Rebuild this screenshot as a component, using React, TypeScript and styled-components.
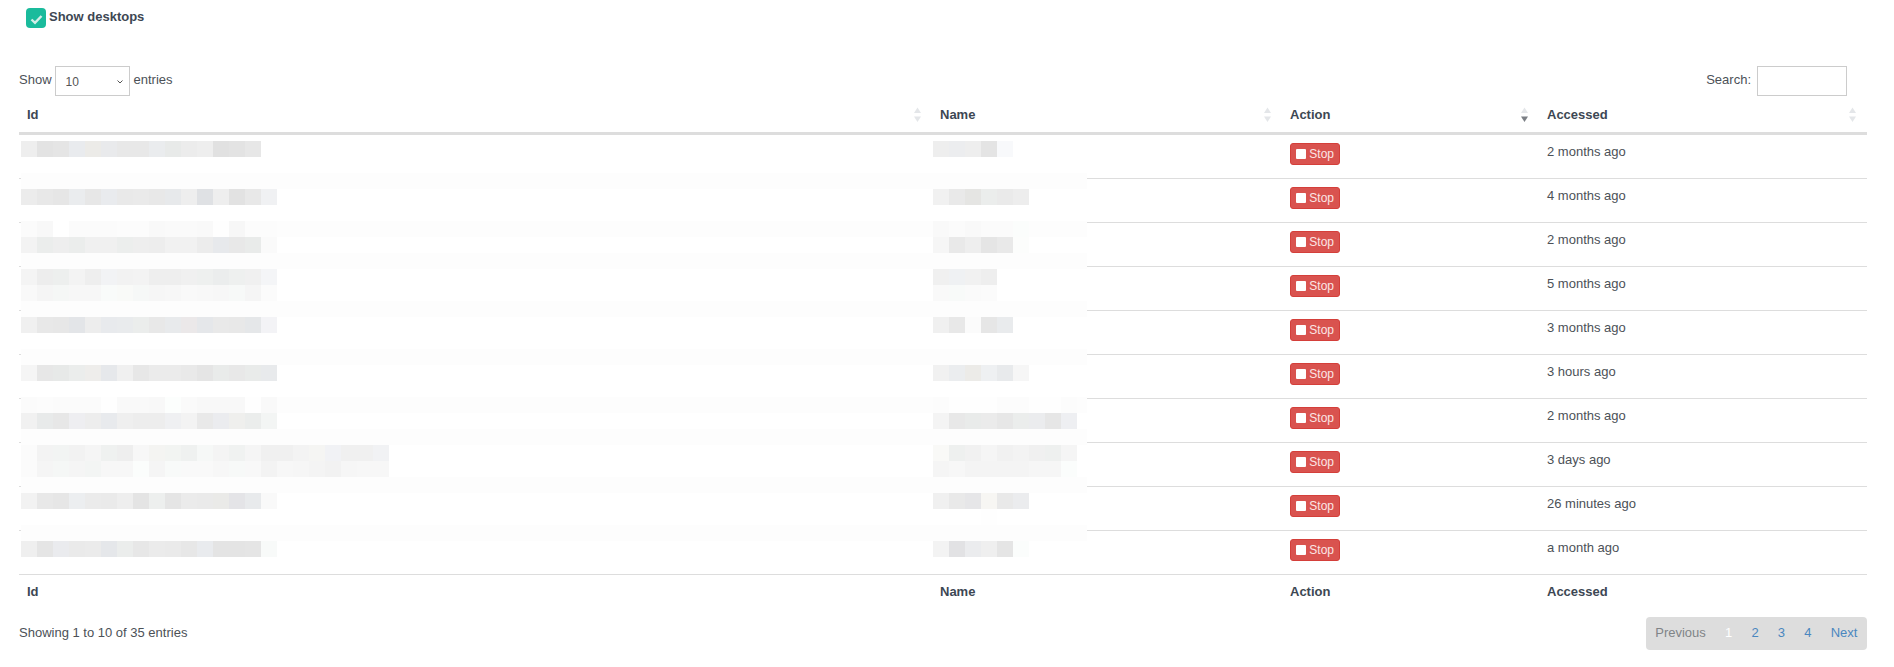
import React from "react";
import styled, { createGlobalStyle } from "styled-components";

const GlobalStyle = createGlobalStyle`
  html, body {
    margin: 0;
    padding: 0;
    background: #fff;
  }
  body {
    font-family: "Liberation Sans", Arial, sans-serif;
    font-size: 13px;
    line-height: 1.42857;
    color: #4c5157;
  }
`;

const Page = styled.div`
  padding: 0 27px 0 19px;
`;

const ToggleRow = styled.label`
  display: flex;
  align-items: flex-start;
  gap: 3px;
  padding: 8px 0 0 7px;
  height: 28px;
  box-sizing: border-box;
  font-weight: 700;
  color: #3d4753;
`;

const CheckBox = styled.span`
  display: block;
  width: 20px;
  height: 20px;
  border-radius: 4px;
  background: #1abb9c;
`;

const Controls = styled.div`
  display: flex;
  justify-content: space-between;
  align-items: center;
  height: 30px;
  margin-top: 38px;
  padding-right: 20px;
`;

const LengthLabel = styled.label`
  display: flex;
  align-items: flex-start;
  line-height: 28px;
`;

const SelectBox = styled.span`
  position: relative;
  display: block;
  margin: 0 4px 0 3px;
`;

const LengthSelect = styled.select`
  display: block;
  width: 75px;
  height: 30px;
  box-sizing: border-box;
  padding: 1px 0 0 10px;
  border: 1px solid #ccc;
  border-radius: 0;
  appearance: none;
  background: #fff;
  color: #555;
  font: 12px "Liberation Sans", Arial, sans-serif;
`;

const SelectArrow = styled.svg`
  position: absolute;
  top: 14px;
  right: 7px;
  pointer-events: none;
`;

const SearchLabel = styled.label`
  display: flex;
  align-items: flex-start;
  gap: 6px;
  line-height: 28px;
`;

const SearchInput = styled.input`
  width: 90px;
  height: 30px;
  box-sizing: border-box;
  border: 1px solid #ccc;
  border-radius: 0;
  background: #fff;
  outline: none;
`;

const TableWrap = styled.div`
  position: relative;
`;

const Table = styled.table`
  width: 1848px;
  table-layout: fixed;
  border-collapse: separate;
  border-spacing: 0;
`;

const HeadCell = styled.th`
  height: 34px;
  padding: 2px 11px 0 8px;
  border-bottom: 3px solid #ddd;
  font-weight: 700;
  text-align: left;
  color: #3d4753;
`;

const HeadInner = styled.div`
  display: flex;
  justify-content: space-between;
  align-items: center;
`;

const FootCell = styled.th`
  height: 35px;
  box-sizing: border-box;
  padding: 0 8px;
  border-top: 1px solid #ddd;
  font-weight: 700;
  text-align: left;
  color: #3d4753;
`;

const Cell = styled.td`
  padding: 8px;
  vertical-align: top;
  border-top: 1px solid #ddd;
  tr:first-child > & {
    border-top: 0;
  }
`;

const StopButton = styled.button`
  display: flex;
  align-items: center;
  gap: 3.5px;
  width: 50px;
  height: 22px;
  box-sizing: border-box;
  margin: 0 0 5px;
  padding: 0 5px;
  border: 1px solid #d43f3a;
  border-radius: 3px;
  background: #d9534f;
  color: #fbe6e5;
  font: 12px "Liberation Sans", Arial, sans-serif;
`;

const StopSquare = styled.span`
  width: 10.5px;
  height: 10.5px;
  border-radius: 1px;
  background: #fff;
`;

const Mosaic = styled.svg`
  position: absolute;
  left: 2px;
  top: 45px;
  display: block;
`;

const Bottom = styled.div`
  display: flex;
  justify-content: space-between;
  align-items: center;
  height: 33px;
  margin-top: 8px;
`;

const Pager = styled.div`
  display: flex;
  align-items: center;
  height: 33px;
  border-radius: 4px;
  background: #ddd;
`;

const PageLink = styled.a<{ $tone: "off" | "current" | "link" }>`
  padding: 0 9.6px;
  color: ${(p) =>
    p.$tone === "off" ? "#808487" : p.$tone === "current" ? "#fff" : "#4a87bf"};
  text-decoration: none;
`;

function SortIcon({ active }: { active?: boolean }) {
  return (
    <svg width="7" height="16" viewBox="0 0 7 16" aria-hidden="true">
      <path d="M3.5 0.5 L7 6 H0 Z" fill="#e4e6e9" />
      <path d="M0 9.5 H7 L3.5 15 Z" fill={active ? "#7b7f85" : "#e4e6e9"} />
    </svg>
  );
}

// blurred id and name columns: [grid row, first grid column, cells]
// a two digit cell is a grey, a six digit cell is a full colour
const CELL = 16;
const BANDS = [2, 5, 7, 10, 13, 16, 18, 21, 24];
const BLOCKS: [number, number, string][] = [
  [0, 0, "ee e3 e5 e9ebee ecebe8 e9eaec e8 e8 eaecee e8eae9 ec ee e1 e3 e7"],
  [3, 0, "ec e8 e6 eaecee e7 e9ebee e9 ea e8 e7e9eb ee dfe1e4 ee e2 e8 f0f1f3"],
  [5, 0, "fb f8 ff fb fb fb fc fc f9 fa fa f9 fe f7 fc fc"],
  [6, 0, "f3 ebedec ee ebedec f0 f0 eceeed ee ed f1 f1 ec e7e9ec e8 e9ebea fa"],
  [8, 0, "f4 ed edefee f3 ee f2f3f5 f2 f3 ee ee f0 eef0ef ebeded eef0ef f0 f4f5f7"],
  [9, 0, "f9 f5 f5f7f6 f7 f7 f9fbfa f9faf8 f6f8f7 f6 f7 f9 f8 f7 f7f9f8 f5 fb"],
  [11, 0, "f0 e8 e7 e3e5e8 ed e8eaed e9ebed ebedec e8 e8eaec ebe8e9 e5e7ea e9 e8 e5e7e9 f3f3f6"],
  [14, 0, "f5 e7 e7e9e8 ebedec eeedeb e6e8eb f0 e7 eb eb e9 e5 e9ebea e8 e9ebea e8eaec"],
  [16, 0, "fb fc fb fb fb fe f9 f9 f8 fcfefd fa f8 f8 f8 fe f9"],
  [17, 0, "f1 e8eaea e7 eeeef1 ed e8eaed ef ed ed eff0f2 f3 e9 ebecef efefed ebedec f3f5f4"],
  [19, 0, "fb f3 f2f4f3 f2 f5 eff1f0 ee f7 f4f4f2 f2f4f2 eff1f0 f6f8f7 f4 f0f2f1 f5 f0 f0 f3 f5f5f3 f1f2f5 f0 f0 f1f2f4"],
  [20, 0, "fb f5 f5f7f6 f5 f3f5f4 f7 f7 fbfdfc f5 f8faf9 f9 f9 f7 f7f9f8 f8 f3 f7 f6 f4 f2 f6 f7 f7"],
  [22, 0, "f2 e8 e6 eceef0 eb ea ee e4 edefee e5 eb ea eaeae8 e4e4e7 e8eaec f9"],
  [25, 0, "ef e5 eaebee ea eb e5e7ea ebedec e7 eb ea e7 e9ebee e4 e4 e5 f8faf9"],
  [0, 57, "ee ecedef ee e4 f8f9fb"],
  [3, 57, "f1 e9 e5e5e3 ebedec ea ed"],
  [5, 57, "f9 fb f9 fb fb fbfdfc"],
  [6, 57, "f6 e9 ee e5 e9 fcfdfc"],
  [8, 57, "f0 eff1f3 f1 ee"],
  [9, 57, "f9 f8faf9 fa fb"],
  [11, 57, "f0 e8 fb e6 e9ebed"],
  [14, 57, "f1 ebedef ecebe8 eef0f2 e8eaec f6"],
  [16, 57, "fc fe fe fe fc fc fe fe fc"],
  [17, 57, "f4 e8 e9ebea eb e7 ebedec ebecee e6 eeeff2"],
  [19, 57, "f9f9f7 eef0ef f1 f5 f1 f3 f0 eef0ef f5"],
  [20, 57, "f5 f7 f4 f4 f4 f4 f6 f6 fbfdfc"],
  [22, 57, "f0 e9 e6e6e8 f7f6f3 e9 ebecee"],
  [23, 60, "fe"],
  [25, 57, "f3 e2e2e4 ebecee ef e5 fbfdfc"],
];

const toColor = (c: string) => (c.length === 2 ? `#${c}${c}${c}` : `#${c}`);

function BlurredColumns() {
  return (
    <Mosaic width="1066" height="416" shapeRendering="crispEdges" aria-hidden="true">
      <rect width="1066" height="416" fill="#fff" />
      {BANDS.map((row) => (
        <rect key={row} y={row * CELL} width="1066" height={CELL} fill="#fdfdfd" />
      ))}
      {BLOCKS.map(([row, col, cells]) =>
        cells.split(" ").map((c, i) => (
          <rect
            key={`${row}-${col}-${i}`}
            x={(col + i) * CELL}
            y={row * CELL}
            width={CELL}
            height={CELL}
            fill={toColor(c)}
          />
        ))
      )}
    </Mosaic>
  );
}

const ACCESSED = [
  "2 months ago",
  "4 months ago",
  "2 months ago",
  "5 months ago",
  "3 months ago",
  "3 hours ago",
  "2 months ago",
  "3 days ago",
  "26 minutes ago",
  "a month ago",
];

const COLUMNS = ["Id", "Name", "Action", "Accessed"];
const WIDTHS = [913, 350, 257, 328];

export default function App() {
  return (
    <Page>
      <GlobalStyle />
      <ToggleRow>
        <CheckBox>
          <svg width="20" height="20" viewBox="0 0 20 20" aria-hidden="true">
            <path d="M5.5 11.5 L9 14.8 L15.5 8" fill="none" stroke="#d4eee8" strokeWidth="2.4" />
          </svg>
        </CheckBox>
        <span>Show desktops</span>
      </ToggleRow>
      <Controls>
        <LengthLabel>
          Show
          <SelectBox>
            <LengthSelect defaultValue="10">
              <option value="10">10</option>
              <option value="25">25</option>
              <option value="50">50</option>
              <option value="100">100</option>
            </LengthSelect>
            <SelectArrow width="6" height="4" viewBox="0 0 6 4" aria-hidden="true">
              <path d="M0.5 0.5 L3 3 L5.5 0.5" fill="none" stroke="#555" strokeWidth="1" />
            </SelectArrow>
          </SelectBox>
          entries
        </LengthLabel>
        <SearchLabel>
          Search:
          <SearchInput type="search" />
        </SearchLabel>
      </Controls>
      <TableWrap>
        <Table>
          <colgroup>
            {WIDTHS.map((w) => (
              <col key={w} width={w} />
            ))}
          </colgroup>
          <thead>
            <tr>
              {COLUMNS.map((c) => (
                <HeadCell key={c}>
                  <HeadInner>
                    {c}
                    <SortIcon active={c === "Action"} />
                  </HeadInner>
                </HeadCell>
              ))}
            </tr>
          </thead>
          <tbody>
            {ACCESSED.map((when, i) => (
              <tr key={i}>
                <Cell />
                <Cell />
                <Cell>
                  <StopButton>
                    <StopSquare />
                    Stop
                  </StopButton>
                </Cell>
                <Cell>{when}</Cell>
              </tr>
            ))}
          </tbody>
          <tfoot>
            <tr>
              {COLUMNS.map((c) => (
                <FootCell key={c}>{c}</FootCell>
              ))}
            </tr>
          </tfoot>
        </Table>
        <BlurredColumns />
      </TableWrap>
      <Bottom>
        <span>Showing 1 to 10 of 35 entries</span>
        <Pager>
          <PageLink $tone="off">Previous</PageLink>
          <PageLink $tone="current">1</PageLink>
          <PageLink $tone="link">2</PageLink>
          <PageLink $tone="link">3</PageLink>
          <PageLink $tone="link">4</PageLink>
          <PageLink $tone="link">Next</PageLink>
        </Pager>
      </Bottom>
    </Page>
  );
}
